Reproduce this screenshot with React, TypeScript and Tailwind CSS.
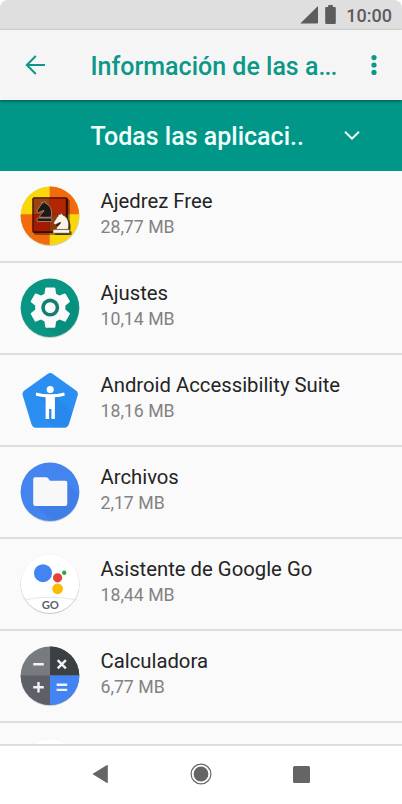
import type { ReactNode } from "react";

const GEAR =
  "M19.14 12.94c.04-.3.06-.61.06-.94 0-.32-.02-.64-.07-.94l2.03-1.58c.18-.14.23-.41.12-.61l-1.92-3.32c-.12-.22-.37-.29-.59-.22l-2.39.96c-.5-.38-1.03-.7-1.62-.94L14.4 2.81c-.04-.24-.24-.41-.48-.41h-3.84c-.24 0-.43.17-.47.41L9.25 5.35c-.59.24-1.13.57-1.62.94l-2.39-.96c-.22-.08-.47 0-.59.22L2.74 8.87c-.12.21-.08.47.12.61l2.03 1.58c-.05.3-.09.63-.09.94s.02.64.07.94l-2.03 1.58c-.18.14-.23.41-.12.61l1.92 3.32c.12.22.37.29.59.22l2.39-.96c.5.38 1.03.7 1.62.94l.36 2.54c.05.24.24.41.48.41h3.84c.24 0 .44-.17.47-.41l.36-2.54c.59-.24 1.13-.56 1.62-.94l2.39.96c.22.08.47 0 .59-.22l1.92-3.32c.12-.22.07-.47-.12-.61z";

const KNIGHT =
  "M3.4 16.6 L15.3 16.6 C16.8 10.5 15.4 4.4 9.9 2.3 L8.8 .2 L7.2 2 L5.8 1 L5.3 3.4 C3.8 4.6 2.9 7 1 9.4 C.5 10.4 1.3 11.6 2.6 11.7 C4.2 11.4 5.2 9.8 8 9.6 C7.8 11.6 3.6 13.2 3.4 16.6 Z";

function Disc({ fill }: { fill: string }) {
  return (
    <>
      <circle cx="32" cy="32.5" r="29.5" fill="#000" opacity=".18" />
      <circle cx="32" cy="31.7" r="29.3" fill={fill} />
    </>
  );
}

function ChessIcon() {
  return (
    <svg viewBox="0 0 64 64" className="size-16">
      <defs>
        <clipPath id="chess">
          <circle cx="32" cy="31.7" r="29.3" />
        </clipPath>
      </defs>
      <Disc fill="#fad60c" />
      <g clipPath="url(#chess)">
        <path d="M31.7 0H64V30.3H31.7zM0 30.3H31.7V64H0z" fill="#f26a0e" />
        <rect x="15.8" y="15" width="36" height="36" rx="2.5" fill="#000" opacity=".4" />
        <rect x="14.3" y="13.2" width="35.6" height="35.8" rx="2" fill="#3a0c04" />
        <path d="M15.6 14.6H31.7V30.3H15.6z" fill="#9a4512" />
        <path d="M31.7 14.6H47.8V30.3H31.7z" fill="#b22604" />
        <path d="M15.6 30.3H31.7V47.2H15.6z" fill="#a51a02" />
        <path d="M31.7 30.3H47.8V47.2H31.7z" fill="#8f3a0a" />
      </g>
      <g transform="translate(18.3 17.3)" fill="#1c1a19" stroke="#d8b79b" strokeWidth=".6">
        <path d={KNIGHT} transform="scale(.96)" />
        <rect x=".8" y="16.8" width="14.8" height="3.4" rx=".8" />
      </g>
      <g transform="translate(36.8 30.6)" fill="#000" opacity=".6">
        <path d={KNIGHT} />
        <rect x=".2" y="16.6" width="16.6" height="3.8" rx=".8" />
      </g>
      <g transform="translate(34.8 28.8)" fill="#fbf4e6" stroke="#4a3324" strokeWidth=".5">
        <path d={KNIGHT} />
        <rect x=".2" y="16.8" width="16.6" height="3.6" rx=".8" />
      </g>
    </svg>
  );
}

function SettingsIcon() {
  return (
    <svg viewBox="0 0 64 64" className="size-16">
      <Disc fill="#099583" />
      <path d="M47 17 L59.5 29 A29 29 0 0 1 39 59.7 L26 49z" fill="#067e6f" opacity=".3" />
      <path d={GEAR} fill="#fafafa" transform="translate(7.1 6.4) scale(2.1)" />
      <circle cx="32.2" cy="31.6" r="9" fill="#12806f" />
      <circle cx="32.2" cy="31.6" r="5.4" fill="#fafafa" />
    </svg>
  );
}

function AccessibilityIcon() {
  return (
    <svg viewBox="0 0 64 64" className="size-16">
      <path
        d="M29.5 5.1Q32.2 3.1 34.9 5.1L58 21.8Q60.7 23.9 59.6 27L51.3 54.2Q50.1 59 46.5 59H17.9Q14.3 59 13.1 54.2L4.8 27Q3.8 23.9 6.4 21.8z"
        transform="translate(0 .8)"
        fill="#2b8ff2"
      />
      <path d="M18.5 28L27.5 36V51L35.5 59H46.5Q50.1 59 51.3 54.2L54 45L36 26z" fill="#2179db" opacity=".3" />
      <circle cx="32.2" cy="21.5" r="3.6" fill="#fff" />
      <path
        d="M18 24.4Q32 28.2 46.2 24.4L46.8 27.5Q42 29 36.9 29.3V51H33.4V41H31.1V51H27.6V29.3Q22.5 29 17.9 27.8z"
        fill="#fff"
      />
    </svg>
  );
}

function FilesIcon() {
  return (
    <svg viewBox="0 0 64 64" className="size-16">
      <Disc fill="#4384ee" />
      <path d="M47.5 21L60.5 34A29 29 0 0 1 34 60.8L17 45z" fill="#3770d4" opacity=".3" />
      <path
        d="M17 17.2H28.2Q29.2 17.2 29.9 18L32 20.7H47.3Q49.3 20.7 49.3 22.7V43.7Q49.3 45.9 47.3 45.9H17.2Q15.2 45.9 15.2 43.7V19.2Q15.2 17.2 17 17.2z"
        fill="#f8f8f9"
      />
    </svg>
  );
}

function AssistantIcon() {
  return (
    <svg viewBox="0 0 64 64" className="size-16">
      <circle cx="32" cy="31.9" r="29.7" fill="#000" opacity=".05" />
      <Disc fill="#fff" />
      <path d="M4.5 48Q32 42.5 59.5 48" fill="none" stroke="#e6e6e6" strokeWidth="1" />
      <circle cx="25" cy="21.2" r="9" fill="#4384f3" />
      <circle cx="39.6" cy="25.8" r="4.6" fill="#e54235" />
      <circle cx="46.2" cy="20.8" r="2.2" fill="#34a253" />
      <circle cx="39.6" cy="36.8" r="5.4" fill="#fabb05" />
      <text x="32.3" y="57.3" textAnchor="middle" fontFamily="Lato, sans-serif" fontWeight="700" fontSize="11.3" fill="#5f6368">
        GO
      </text>
    </svg>
  );
}

function CalculatorIcon() {
  return (
    <svg viewBox="0 0 64 64" className="size-16">
      <defs>
        <clipPath id="calc">
          <circle cx="32" cy="31.7" r="29.3" />
        </clipPath>
      </defs>
      <Disc fill="#777b80" />
      <g clipPath="url(#calc)">
        <path d="M32 0H64V31.5H32z" fill="#3b4043" />
        <path d="M0 31.5H32V64H0z" fill="#5d6167" />
        <path d="M32 31.5H64V64H32z" fill="#4384f4" />
      </g>
      <g stroke="#f3f3f4" strokeWidth="2.4">
        <path d="M15.2 20.2H25.8M15.2 43.2H25.8M20.5 37.9V48.5" />
        <path d="M39.7 16.2L47.9 24.4M47.9 16.2L39.7 24.4M38.6 40.8H49.2M38.6 45.9H49.2" />
      </g>
    </svg>
  );
}

const APPS: { name: string; size: string; icon: ReactNode }[] = [
  { name: "Ajedrez Free", size: "28,77 MB", icon: <ChessIcon /> },
  { name: "Ajustes", size: "10,14 MB", icon: <SettingsIcon /> },
  { name: "Android Accessibility Suite", size: "18,16 MB", icon: <AccessibilityIcon /> },
  { name: "Archivos", size: "2,17 MB", icon: <FilesIcon /> },
  { name: "Asistente de Google Go", size: "18,44 MB", icon: <AssistantIcon /> },
  { name: "Calculadora", size: "6,77 MB", icon: <CalculatorIcon /> },
];

function StatusBar() {
  return (
    <div className="flex h-[30px] shrink-0 items-center justify-end bg-[#dfdfdf] pr-[10px] text-[#5c5c5c]">
      <svg viewBox="0 0 18 18" className="mr-[7px] size-[18px]" fill="currentColor">
        <path d="M18 0V16.3Q18 17.5 17 17.5H.3z" />
      </svg>
      <svg viewBox="0 0 11 20" className="mr-[10px] h-5 w-[11px]" fill="currentColor">
        <path d="M3.2 0H7.8V2H9.8Q10.8 2 10.8 3V18Q10.8 19 9.8 19H1.2Q.2 19 .2 18V3Q.2 2 1.2 2H3.2z" />
      </svg>
      <span className="pt-px text-[18px] leading-none font-medium">10:00</span>
    </div>
  );
}

function AppBar() {
  return (
    <header className="z-10 flex h-[70px] shrink-0 items-center bg-[#f5f5f5] pl-[25px] text-[#0b9888] shadow-[0_1px_3px_rgba(0,0,0,0.45)]">
      <svg viewBox="0 0 21 20" className="h-5 w-[21px]" fill="none" stroke="currentColor" strokeWidth="2">
        <path d="M20 10H2M10.8 1L1.8 10L10.8 19" />
      </svg>
      <h1 className="ml-[44.5px] w-[247.5px] pt-0.5 text-[25px] leading-none font-medium whitespace-nowrap">
        Información de las a<span className="-tracking-[0.9px]">...</span>
      </h1>
      <svg viewBox="0 0 6 20" className="ml-[33px] h-5 w-1.5" fill="currentColor">
        <circle cx="3" cy="2.6" r="2.6" />
        <circle cx="3" cy="10" r="2.6" />
        <circle cx="3" cy="17.4" r="2.6" />
      </svg>
    </header>
  );
}

function FilterBar() {
  return (
    <div className="flex h-[71px] shrink-0 items-center bg-[#009688] pl-[90.5px] text-[#f0fffc]">
      <span className="w-[213px] pt-0.5 text-[25px] leading-none font-medium whitespace-nowrap">
        Todas las aplicaci..
      </span>
      <svg viewBox="0 0 16 10" className="ml-10 h-[10px] w-4" fill="none" stroke="currentColor" strokeWidth="2">
        <path d="M1 .7L8 7.7L15 .7" />
      </svg>
    </div>
  );
}

function NavBar() {
  return (
    <nav className="flex h-[60px] shrink-0 items-center border-t-2 border-[#dedede] bg-white pb-0.5 pl-[92px] text-[#656565]">
      <svg viewBox="0 0 16 20" className="h-5 w-4" fill="currentColor">
        <path d="M14.6 1.2Q15.8 .6 15.8 1.8V18.2Q15.8 19.4 14.6 18.8L1.2 10.6Q.4 10 1.2 9.4z" />
      </svg>
      <svg viewBox="0 0 22 22" className="ml-[81.5px] size-[22px]">
        <circle cx="11" cy="11" r="9.9" fill="none" stroke="currentColor" strokeWidth="1.2" />
        <circle cx="11" cy="11" r="7.4" fill="currentColor" />
      </svg>
      <div className="ml-[81px] size-[17px] rounded-[1.5px] bg-[#656565]" />
    </nav>
  );
}

export default function App() {
  return (
    <div className="h-[804px] w-[402px] bg-white font-['Roboto',sans-serif]">
      <div className="flex h-full flex-col overflow-hidden rounded-t-[8px] bg-[#fafafa]">
        <StatusBar />
        <AppBar />
        <FilterBar />
        <ul className="min-h-0 flex-1 overflow-hidden">
          {APPS.map((app) => (
            <li key={app.name} className="flex h-[92px] border-b-2 border-[#dedede] pt-[13px] pl-[18px]">
              {app.icon}
              <div className="ml-[18.5px] pt-1.5">
                <p className="text-[20.3px] leading-[23px] text-[#242424]">{app.name}</p>
                <p className="mt-1 text-[17.7px] leading-5 text-[#828282]">{app.size}</p>
              </div>
            </li>
          ))}
          <li className="pt-4 pl-[21px]">
            <div className="size-[59px] rounded-full bg-white shadow-[0_0_1px_rgba(0,0,0,0.12)]" />
          </li>
        </ul>
        <NavBar />
      </div>
    </div>
  );
}
